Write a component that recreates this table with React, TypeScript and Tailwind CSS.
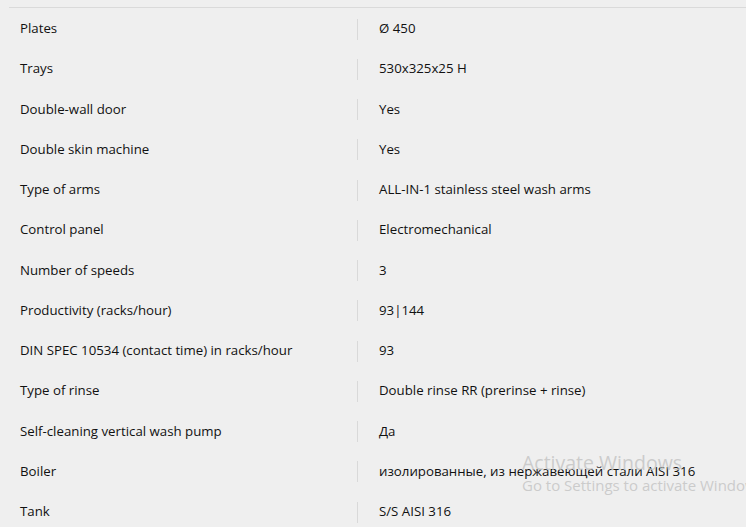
const ROWS: [string, string][] = [
  ["Plates", "Ø 450"],
  ["Trays", "530x325x25 H"],
  ["Double-wall door", "Yes"],
  ["Double skin machine", "Yes"],
  ["Type of arms", "ALL-IN-1 stainless steel wash arms"],
  ["Control panel", "Electromechanical"],
  ["Number of speeds", "3"],
  ["Productivity (racks/hour)", "93|144"],
  ["DIN SPEC 10534 (contact time) in racks/hour", "93"],
  ["Type of rinse", "Double rinse RR (prerinse + rinse)"],
  ["Self-cleaning vertical wash pump", "Да"],
  ["Boiler", "изолированные, из нержавеющей стали AISI 316"],
  ["Tank", "S/S AISI 316"],
];

export default function App() {
  return (
    <div className="relative h-[527px] w-[746px] overflow-hidden bg-[#efefef] pt-[7px] pl-[9px] font-['Open_Sans',sans-serif] text-[13.25px] text-[#111]">
      <div className="border-t border-[#dadada] pt-px">
        {ROWS.map(([label, value]) => (
          <div key={label} className="flex h-[40.25px] items-center">
            <div className="w-[348px] pl-[11px]">{label}</div>
            <div className="flex items-center">
              <div className="h-[21px] w-px bg-[#d9d9d9]" />
              <div className="pl-[21px] whitespace-nowrap">{value}</div>
            </div>
          </div>
        ))}
      </div>

      {/* windows activation watermark */}
      <div className="pointer-events-none absolute left-[522px] top-[451px] leading-tight text-[#c2c2c2]/80">
        <div className="text-[19.5px]">Activate Windows</div>
        <div className="mt-[1px] whitespace-nowrap text-[15px]">Go to Settings to activate Windows.</div>
      </div>
    </div>
  );
}
